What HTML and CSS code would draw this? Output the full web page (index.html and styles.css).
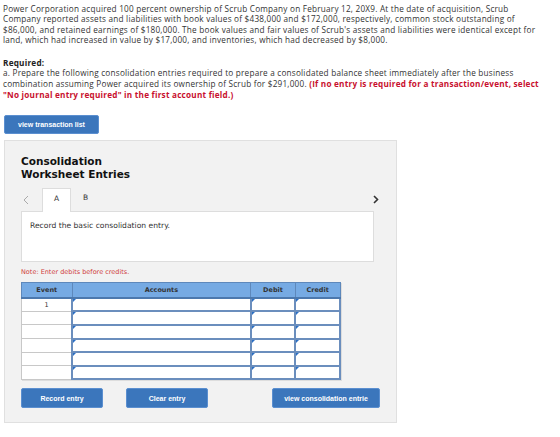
FILE: index.html
```html
<!DOCTYPE html>
<html lang="en">
  <head>
    <meta charset="UTF-8" />
    <title>Consolidation Worksheet</title>
    <link rel="stylesheet" href="styles.css">
  </head>
  <body>
    <div class="question">
      <p>
        Power Corporation acquired 100 percent ownership of Scrub Company on February 12, 20X9. At the date of acquisition, Scrub<br>
        Company reported assets and liabilities with book values of $438,000 and $172,000, respectively, common stock outstanding of<br>
        $86,000, and retained earnings of $180,000. The book values and fair values of Scrub's assets and liabilities were identical except for<br>
        land, which had increased in value by $17,000, and inventories, which had decreased by $8,000.
      </p>
      <p>
        <strong>Required:</strong><br>
        a. Prepare the following consolidation entries required to prepare a consolidated balance sheet immediately after the business<br>
        combination assuming Power acquired its ownership of Scrub for $291,000. <span class="warn">(If no entry is required for a transaction/event, select<br>
        "No journal entry required" in the first account field.)</span>
      </p>
    </div>

    <button class="btn btn-list">view transaction list</button>

    <div class="panel">
      <h2>Consolidation<br>Worksheet Entries</h2>
      <div class="tabs">
        <span class="arrow prev">
          <svg width="6" height="10" viewBox="0 0 6 10"><polyline points="5,1 1,5 5,9" fill="none" stroke="#aaa" stroke-width="1"/></svg>
        </span>
        <span class="tab active">A</span>
        <span class="tab">B</span>
        <span class="arrow next">
          <svg width="6" height="9" viewBox="0 0 6 9"><polyline points="1,1 4.5,4.5 1,8" fill="none" stroke="#333" stroke-width="1.6"/></svg>
        </span>
      </div>
      <div class="prompt">Record the basic consolidation entry.</div>
      <p class="note">Note: Enter debits before credits.</p>
      <table class="entries">
        <thead>
          <tr>
            <th class="c-event">Event</th>
            <th class="c-acct">Accounts</th>
            <th class="c-num">Debit</th>
            <th class="c-num">Credit</th>
          </tr>
        </thead>
        <tbody>
          <tr><td class="ev">1</td><td class="in"></td><td class="in"></td><td class="in"></td></tr>
          <tr><td class="ev"></td><td class="in"></td><td class="in"></td><td class="in"></td></tr>
          <tr><td class="ev"></td><td class="in"></td><td class="in"></td><td class="in"></td></tr>
          <tr><td class="ev"></td><td class="in"></td><td class="in"></td><td class="in"></td></tr>
          <tr><td class="ev"></td><td class="in"></td><td class="in"></td><td class="in"></td></tr>
          <tr><td class="ev"></td><td class="in"></td><td class="in"></td><td class="in"></td></tr>
        </tbody>
      </table>
      <div class="actions">
        <button class="btn btn-wide">Record entry</button>
        <button class="btn btn-wide">Clear entry</button>
        <button class="btn btn-view">view consolidation entrie</button>
      </div>
    </div>
  </body>
</html>
```

FILE: styles.css
```css
body {
  margin: 0;
  padding: 3.5px 3px 0 3px;
  font-family: "Open Sans", Arial, sans-serif;
  color: #333;
  background: #fff;
}

.question {
  font-size: 8.2px;
  line-height: 10.6px;
  letter-spacing: 0.22px;
  white-space: nowrap;
}

.question p {
  margin: 0 0 12px 0;
}

.question strong {
  color: #222;
}

.warn {
  color: #c8102e;
  font-weight: bold;
}

.btn {
  background-color: #3b76bc;
  color: #fff;
  border: 1px solid #5b8fd0;
  border-radius: 2px;
  font-family: "Liberation Sans", Arial, sans-serif;
  font-weight: bold;
  font-size: 7px;
  cursor: pointer;
  padding: 0;
}

.btn-list {
  display: block;
  width: 95px;
  height: 19px;
  margin: 15px 0 6px 1px;
}

.panel {
  width: 367px;
  margin-left: 1px;
  background: #f2f2f2;
  border: 1px solid #e0e0e0;
  padding: 14px 8px 14px 16px;
  font-family: "DejaVu Sans", Verdana, sans-serif;
}

.panel h2 {
  font-size: 10.5px;
  line-height: 13px;
  margin: 0 0 7px 0;
  color: #111;
}

.tabs {
  display: flex;
  align-items: flex-end;
  height: 23px;
  width: 360px;
}

.tab {
  width: 29px;
  height: 23px;
  line-height: 20px;
  text-align: center;
  font-size: 7.5px;
  color: #333;
}

.tab.active {
  background: #fff;
  border: 1px solid #ddd;
  border-bottom: none;
  margin-bottom: -1px;
  height: 24px;
  box-sizing: border-box;
}

.arrow {
  display: flex;
  align-items: center;
  align-self: center;
  height: 12px;
}

.prev {
  width: 21px;
  padding-left: 2px;
  box-sizing: border-box;
}

.next {
  margin-left: auto;
  padding-right: 2px;
}

.prompt {
  width: 343px;
  height: 49px;
  box-sizing: content-box;
  background: #fff;
  border: 1px solid #ddd;
  padding: 0 0 0 8px;
  line-height: 28px;
  font-size: 7.6px;
  color: #333;
}

.note {
  color: #d0403a;
  font-size: 6.5px;
  line-height: 8px;
  margin: 6px 0 6px 0;
}

.entries {
  border-collapse: collapse;
  width: 320px;
  background: #fff;
  font-size: 6.5px;
  box-shadow: 1px 1px 0 #ddd;
}

.entries thead tr {
  height: 15px;
}

.entries tbody tr {
  height: 13.6px;
}

.entries th {
  background: #76aae3;
  color: #333;
  font-weight: bold;
  padding: 0;
  border: 1px solid #5e88bb;
  border-bottom: 2px solid #4c78ad;
}

.c-event {
  width: 50px;
}

.c-acct {
  width: 180px;
}

.c-num {
  width: 44px;
}

.entries td {
  padding: 0;
  position: relative;
}

.entries td.ev {
  border: 1px solid #c8c8c8;
  text-align: center;
  color: #333;
}

.entries td.in {
  border: 2px solid #6b8ebd;
  border-top-color: #94aed0;
}

.entries td.in::before {
  content: "";
  position: absolute;
  left: 0;
  top: 0;
  border-left: 3px solid #2a6fc4;
  border-bottom: 3px solid transparent;
}

.actions {
  display: flex;
  margin-top: 8px;
}

.btn-wide {
  width: 82px;
  height: 20px;
  margin-right: 23px;
}

.btn-view {
  width: 108px;
  height: 20px;
  margin-left: 41px;
}
```
